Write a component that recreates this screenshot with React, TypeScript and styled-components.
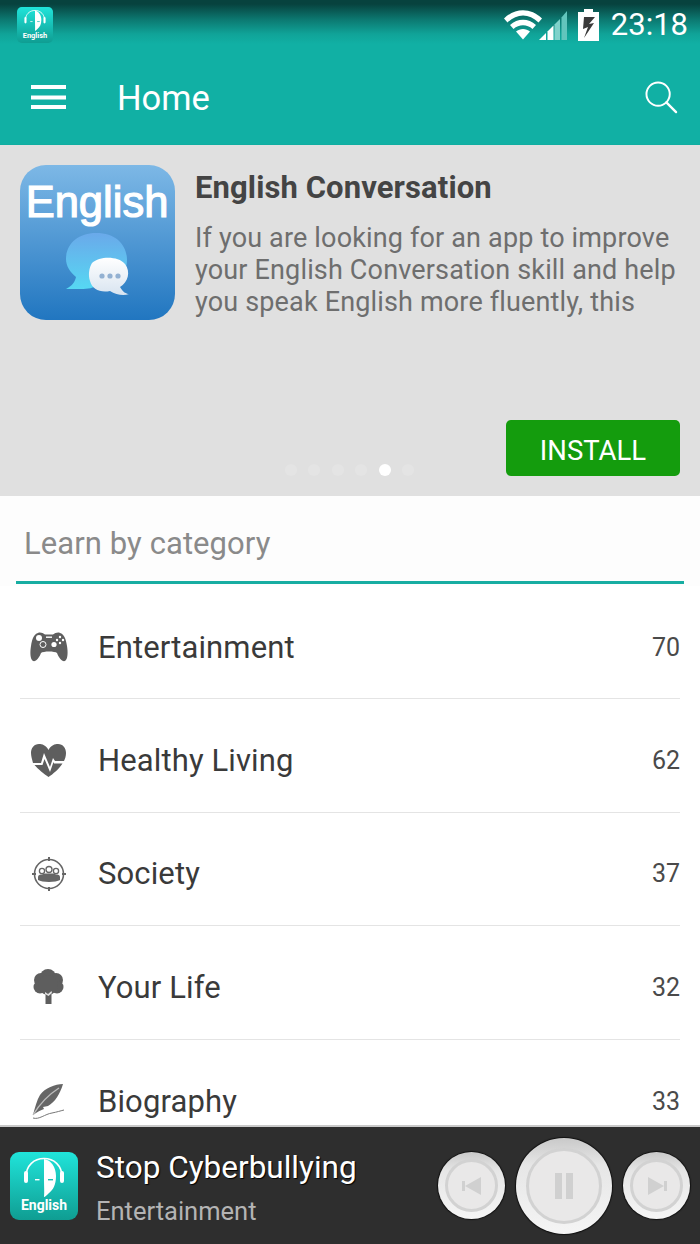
import React from 'react';
import styled, { createGlobalStyle } from 'styled-components';

const GlobalStyle = createGlobalStyle`
  html, body {
    margin: 0;
    padding: 0;
    background: #fff;
    font-family: Roboto, "Liberation Sans", sans-serif;
  }
`;

const Screen = styled.div`
  width: 700px;
  height: 1244px;
  display: flex;
  flex-direction: column;
  overflow: hidden;
`;

const Header = styled.header`
  height: 145px;
  flex: none;
  box-sizing: border-box;
  border-bottom: 1px solid #10ada1;
  background: linear-gradient(180deg, #07423e 0, #07423e 4px, #0c7a72 20px, #10a398 34px, #11b0a4 44px);
`;

const StatusBar = styled.div`
  height: 48px;
  box-sizing: border-box;
  display: flex;
  align-items: flex-start;
  justify-content: space-between;
  padding: 7px 12px 0 17px;
`;

const StatusRight = styled.div`
  display: flex;
  align-items: center;
`;

const StatusSlot = styled.span<{ $gap: number }>`
  display: flex;
  margin-left: ${(p) => p.$gap}px;
`;

const Clock = styled.span`
  color: #fff;
  font-size: 31px;
  line-height: 36px;
  margin-left: 12px;
`;

const Toolbar = styled.div`
  height: 96px;
  box-sizing: border-box;
  display: flex;
  align-items: center;
  padding: 3px 22px 0 31px;
`;

const Title = styled.h1`
  margin: 0 0 0 51px;
  color: #fff;
  font-size: 34.5px;
  font-weight: 400;
  flex: 1;
`;

const Hero = styled.section`
  height: 351px;
  flex: none;
  box-sizing: border-box;
  background: #e0e0e0;
  padding: 20px 20px 0;
  position: relative;
`;

const HeroTop = styled.div`
  display: flex;
  gap: 20px;
`;

const HeroText = styled.div`
  flex: 1;
`;

const HeroTitle = styled.h2`
  margin: 5px 0 16px;
  font-size: 31px;
  line-height: 36px;
  font-weight: 700;
  letter-spacing: 0.1px;
  color: #444;
`;

const HeroBody = styled.p`
  margin: 0;
  font-size: 27px;
  line-height: 32px;
  letter-spacing: 0.16px;
  color: #6e6e6e;
`;

const InstallButton = styled.button`
  position: absolute;
  right: 20px;
  bottom: 20px;
  width: 174px;
  height: 56px;
  padding: 5px 0 0;
  border: none;
  border-radius: 5px;
  background: #149c0d;
  color: #fff;
  font-family: Roboto, sans-serif;
  font-size: 27.5px;
`;

const Dots = styled.div`
  position: absolute;
  left: 285px;
  top: 319px;
  display: flex;
  gap: 11.4px;
`;

const Dot = styled.span<{ $active?: boolean }>`
  width: 12px;
  height: 12px;
  border-radius: 50%;
  background: ${(p) => (p.$active ? '#ffffff' : '#e4e4e4')};
`;

const CategoryHead = styled.div`
  height: 90px;
  flex: none;
  box-sizing: border-box;
  padding: 0 16px;
  background: #fdfdfd;
`;

const CategoryTitle = styled.div`
  height: 88px;
  box-sizing: border-box;
  padding: 28px 0 0 8px;
  border-bottom: 3px solid #17ada2;
  color: #8a8a8a;
  font-size: 31px;
  line-height: 40px;
  letter-spacing: 0.08px;
`;

const List = styled.div`
  flex: 1;
  min-height: 0;
  overflow: hidden;
  padding: 0 20px;
  background: #fff;
`;

const Row = styled.div`
  height: 113.4px;
  flex: none;
  box-sizing: border-box;
  padding-top: 10px;
  display: flex;
  align-items: center;
  border-bottom: 1px solid #e4e4e4;
  &:last-child {
    border-bottom: none;
  }
`;

const RowIcon = styled.div`
  width: 78px;
  flex: none;
  display: flex;
  justify-content: center;
  padding: 0 29px 0 8px;
  box-sizing: border-box;
`;

const RowLabel = styled.span`
  flex: 1;
  color: #3a3a3a;
  font-size: 31px;
  letter-spacing: 0.12px;
`;

const RowCount = styled.span`
  color: #4a4a4a;
  font-size: 25px;
`;

const Player = styled.footer`
  height: 119px;
  flex: none;
  box-sizing: border-box;
  border-top: 2px solid #c9c9c9;
  background: #2e2e2e;
  display: flex;
  align-items: center;
  padding: 0 10px 0 10px;
`;

const TrackInfo = styled.div`
  flex: 1;
  margin-left: 18px;
  padding-top: 9px;
  display: flex;
  flex-direction: column;
`;

const TrackTitle = styled.span`
  color: #fff;
  font-size: 31.5px;
  line-height: 40px;
  margin-top: -4px;
  text-shadow: 1px 1px 1px #000;
`;

const TrackCategory = styled.span`
  color: #b4b4b4;
  font-size: 25.5px;
  line-height: 34px;
  margin-top: 6px;
`;

const Controls = styled.div`
  display: flex;
  align-items: center;
  gap: 11px;
`;

const RoundButton = styled.button<{ $size: number }>`
  width: ${(p) => p.$size}px;
  height: ${(p) => p.$size}px;
  padding: 0;
  border: none;
  border-radius: 50%;
  background: linear-gradient(180deg, #c9c9c9 0, #e6e6e6 28%, #f5f5f5 100%);
  box-shadow: 0 0 1px 1px #111;
  display: flex;
  align-items: center;
  justify-content: center;
`;

const RoundInner = styled.div<{ $size: number }>`
  width: ${(p) => p.$size}px;
  height: ${(p) => p.$size}px;
  box-sizing: border-box;
  border-radius: 50%;
  border: 3px solid #d2d2d2;
  background: #e9e8e8;
  display: flex;
  align-items: center;
  justify-content: center;
`;

const AppLogo = ({ size }: { size: number }) => (
  <svg width={size} height={size} viewBox="0 0 68 68">
    <defs>
      <linearGradient id="logoBg" x1="0" y1="0" x2="0" y2="1">
        <stop offset="0" stopColor="#20e4da" />
        <stop offset="1" stopColor="#0f9d92" />
      </linearGradient>
    </defs>
    <rect width="68" height="68" rx="9" fill="url(#logoBg)" />
    <path d="M16 26 C15 0 53 0 52 26" fill="none" stroke="#fff" strokeWidth="1.6" />
    <rect x="14" y="19" width="4" height="12" rx="2" fill="#fff" />
    <rect x="50" y="19" width="4" height="12" rx="2" fill="#fff" />
    <path d="M34 7 C41 8 46 15 46 24 C46 33 43 38 39 41 C37 43 35 45 34 45 C34.500 40 34 34 34 28Z" fill="#fff" />
    <rect x="25" y="27" width="4.500" height="1.400" fill="#fff" />
    <rect x="38" y="27" width="5" height="1.400" fill="#1bbfb4" />
    <text x="34" y="58" textAnchor="middle" fontFamily="Roboto, sans-serif" fontWeight="700" fontSize="14" fill="#fff">
      English
    </text>
  </svg>
);

const WifiIcon = () => (
  <svg width="38" height="30" viewBox="0 0 38 30">
    <path d="M0 8.500 C11 -2.500 27 -2.500 38 8.500 L34.500 12.500 C25 3 13 3 3.500 12.500Z" fill="#fff" />
    <path d="M6 15 C13.500 8 24.500 8 32 15 L28.500 19 C23 14 15 14 9.500 19Z" fill="#fff" />
    <path d="M12 21.500 C16 18 22 18 26 21.500 L19 29.500Z" fill="#fff" />
  </svg>
);

const SignalIcon = () => (
  <svg width="29" height="32" viewBox="0 0 29 32">
    <path d="M0 31 L7 24 V31Z" fill="#fff" />
    <path d="M8.500 22.500 L14.500 16.500 V31 H8.500Z" fill="#fff" />
    <path d="M15.500 15.500 L21 10 V31 H15.500Z" fill="#7fd2cb" />
    <path d="M22.500 8.500 L28 2 V31 H22.500Z" fill="#62c5bd" />
  </svg>
);

const BatteryIcon = () => (
  <svg width="21" height="32" viewBox="0 0 21 32">
    <path d="M6 0 H15 V3 H21 V32 H0 V3 H6Z" fill="#fff" />
    <path d="M17 8 L6 8 L5 20 L10 18 L6 29 L16 14 L11 15Z" fill="#3a3a3a" />
  </svg>
);

const MenuIcon = () => (
  <svg width="35" height="25" viewBox="0 0 35 25">
    <rect y="0" width="35" height="4" fill="#fff" />
    <rect y="10.500" width="35" height="4" fill="#fff" />
    <rect y="20" width="35" height="4" fill="#fff" />
  </svg>
);

const SearchIcon = () => (
  <svg width="33" height="33" viewBox="0 0 34 34" fill="none" stroke="#fff" strokeWidth="2">
    <circle cx="13.500" cy="13.500" r="12" />
    <path d="M22 22 L32 32" strokeLinecap="round" strokeWidth="2.400" />
  </svg>
);

const HeroIcon = () => (
  <svg width="155" height="155" viewBox="0 0 155 155">
    <defs>
      <linearGradient id="heroBg" x1="0" y1="0" x2="0" y2="1">
        <stop offset="0" stopColor="#7db8e6" />
        <stop offset="1" stopColor="#2176c0" />
      </linearGradient>
      <linearGradient id="bubbleBg" x1="0" y1="0" x2="0" y2="1">
        <stop offset="0" stopColor="#6aa9ea" />
        <stop offset="1" stopColor="#56d8f3" />
      </linearGradient>
      <linearGradient id="smallBubble" x1="0" y1="0" x2="0" y2="1">
        <stop offset="0" stopColor="#ffffff" />
        <stop offset="1" stopColor="#d8e4f0" />
      </linearGradient>
    </defs>
    <rect width="155" height="155" rx="26" fill="url(#heroBg)" />
    <text x="77" y="52" textAnchor="middle" fontFamily="'Liberation Sans', sans-serif" fontSize="43.500" fill="#fff" stroke="#fff" strokeWidth="1.200">
      English
    </text>
    <path d="M76 68 C97 68 107 81 107 95 C107 110 94 120 76 121 C70 125 58 124 46 124 C52 121 55 117 56 112 C50 107 46 101 46 94 C46 79 58 68 76 68Z" fill="url(#bubbleBg)" />
    <path d="M72 98 C80 91 98 91 105 99 C111 107 108 117 100 122 C103 127 106 129 109 129 C104 131 96 130 90 126 C80 128 72 124 70 116 C68 110 69 103 72 98Z" fill="url(#smallBubble)" />
    <circle cx="82" cy="111" r="2.600" fill="#93b1d2" />
    <circle cx="90" cy="111" r="2.600" fill="#93b1d2" />
    <circle cx="98" cy="111" r="2.600" fill="#93b1d2" />
  </svg>
);

const GamepadIcon = () => (
  <svg width="38" height="30" viewBox="0 0 38 30">
    <path d="M8 1 C10 0 13 1 15 2.500 H23 C25 1 28 0 30 1 C34 2 36 7 37 14 C38 20 38 27 35 29 C32 30 29 26 27 21 C25 19 13 19 11 21 C9 26 6 30 3 29 C0 27 0 20 1 14 C2 7 4 2 8 1Z" fill="#5e5e5e" />
    <circle cx="9" cy="6" r="3" fill="#fff" />
    <circle cx="13" cy="12.500" r="3" fill="none" stroke="#fff" strokeWidth="1" />
    <circle cx="24" cy="12.500" r="2.600" fill="#fff" />
    <circle cx="30" cy="5" r="1.200" fill="#fff" />
    <circle cx="33" cy="8" r="1.200" fill="#fff" />
    <circle cx="27" cy="8" r="1.200" fill="#fff" />
    <circle cx="30" cy="11" r="1.200" fill="#fff" />
    <rect x="16" y="4.500" width="6" height="1.400" fill="#fff" />
  </svg>
);

const HeartIcon = () => (
  <svg width="35" height="33" viewBox="0 0 35 33">
    <path d="M17.500 6 C20 1 24 0 27 0 C32 0 35 4 35 9 C35 12 34 15 33 17 H24 L22 14 L19 23 L13 9 L10 19 H2 C1 15 0 12 0 9 C0 4 3 0 8 0 C11 0 15 1 17.500 6Z" fill="#5e5e5e" />
    <path d="M3.500 21 H11.500 L13.500 15 L19 28 L22.500 18 L23 19.500 H31.500 C28 25 22 30 17.500 33 C13 30 7 25 3.500 21Z" fill="#5e5e5e" />
  </svg>
);

const SocietyIcon = () => (
  <svg width="34" height="34" viewBox="0 0 34 34">
    <circle cx="17" cy="17" r="14.500" fill="none" stroke="#666" strokeWidth="1.600" />
    <rect x="16" y="0" width="2" height="4" fill="#666" />
    <rect x="16" y="30" width="2" height="4" fill="#666" />
    <rect x="0" y="16" width="4" height="2" fill="#666" />
    <rect x="30" y="16" width="4" height="2" fill="#666" />
    <circle cx="10" cy="14" r="2.600" fill="none" stroke="#666" strokeWidth="1.300" />
    <circle cx="17" cy="12.500" r="3" fill="none" stroke="#666" strokeWidth="1.300" />
    <circle cx="24" cy="14" r="2.600" fill="none" stroke="#666" strokeWidth="1.300" />
    <path d="M6 23 V20 C6 18 8 17.500 10 17.500 C11 17 12 16.500 13 16.500 H21 C22 16.500 23 17 24 17.500 C26 17.500 28 18 28 20 V23 C24 25.500 10 25.500 6 23Z" fill="#666" />
  </svg>
);

const TreeIcon = () => (
  <svg width="31" height="36" viewBox="0 0 31 36">
    <g fill="#5e5e5e">
      <circle cx="15" cy="8" r="8" />
      <circle cx="8" cy="11" r="7" />
      <circle cx="23" cy="11" r="7" />
      <circle cx="7" cy="18" r="6.500" />
      <circle cx="24" cy="18" r="6.500" />
      <circle cx="15" cy="16" r="10" />
      <path d="M12.500 20 H18.500 V35 H12.500Z" />
    </g>
    <path d="M12 23 L15 25 L18.500 22 L19 24 L15.500 27 L12 25Z" fill="#fff" opacity="0.8" />
  </svg>
);

const FeatherIcon = () => (
  <svg width="36" height="38" viewBox="0 0 36 38">
    <path d="M32 2 C24 2 14 6 9 13 C6 18 4 25 2 33 C6 30 10 28 13 27 L12 25 L17 24 C24 20 29 12 32 2Z" fill="#666" />
    <path d="M2 33 C8 23 17 13 28 6" stroke="#bdbdbd" strokeWidth="1.400" fill="none" />
    <path d="M2 36 C8 38 14 32 21 31 C26 30 29 29 33 28" stroke="#777" strokeWidth="1" fill="none" />
  </svg>
);

const PrevIcon = () => (
  <svg width="20" height="18" viewBox="0 0 20 18">
    <rect x="0" y="4" width="3" height="10" fill="#d0d0d0" />
    <path d="M3 9 L19 0 V18Z" fill="#d0d0d0" />
  </svg>
);

const NextIcon = () => (
  <svg width="20" height="18" viewBox="0 0 20 18">
    <path d="M1 0 L17 9 L1 18Z" fill="#d0d0d0" />
    <rect x="17" y="4" width="3" height="10" fill="#d0d0d0" />
  </svg>
);

const PauseIcon = () => (
  <svg width="18" height="26" viewBox="0 0 18 26">
    <rect x="0" y="0" width="7" height="26" fill="#d0d0d0" />
    <rect x="11" y="0" width="7" height="26" fill="#d0d0d0" />
  </svg>
);

const categories = [
  { label: 'Entertainment', count: 70, icon: <GamepadIcon /> },
  { label: 'Healthy Living', count: 62, icon: <HeartIcon /> },
  { label: 'Society', count: 37, icon: <SocietyIcon /> },
  { label: 'Your Life', count: 32, icon: <TreeIcon /> },
  { label: 'Biography', count: 33, icon: <FeatherIcon /> },
];

const App = () => (
  <Screen>
    <GlobalStyle />
    <Header>
      <StatusBar>
        <AppLogo size={36} />
        <StatusRight>
          <WifiIcon />
          <StatusSlot $gap={-3}>
            <SignalIcon />
          </StatusSlot>
          <StatusSlot $gap={10}>
            <BatteryIcon />
          </StatusSlot>
          <Clock>23:18</Clock>
        </StatusRight>
      </StatusBar>
      <Toolbar>
        <MenuIcon />
        <Title>Home</Title>
        <SearchIcon />
      </Toolbar>
    </Header>
    <Hero>
      <HeroTop>
        <HeroIcon />
        <HeroText>
          <HeroTitle>English Conversation</HeroTitle>
          <HeroBody>
            If you are looking for an app to improve your English Conversation skill and help you speak English more fluently, this
          </HeroBody>
        </HeroText>
      </HeroTop>
      <Dots>
        {[0, 1, 2, 3, 4, 5].map((i) => (
          <Dot key={i} $active={i === 4} />
        ))}
      </Dots>
      <InstallButton>INSTALL</InstallButton>
    </Hero>
    <CategoryHead>
      <CategoryTitle>Learn by category</CategoryTitle>
    </CategoryHead>
    <List>
      {categories.map((c) => (
        <Row key={c.label}>
          <RowIcon>{c.icon}</RowIcon>
          <RowLabel>{c.label}</RowLabel>
          <RowCount>{c.count}</RowCount>
        </Row>
      ))}
    </List>
    <Player>
      <AppLogo size={68} />
      <TrackInfo>
        <TrackTitle>Stop Cyberbullying</TrackTitle>
        <TrackCategory>Entertainment</TrackCategory>
      </TrackInfo>
      <Controls>
        <RoundButton $size={67}>
          <RoundInner $size={53}>
            <PrevIcon />
          </RoundInner>
        </RoundButton>
        <RoundButton $size={96}>
          <RoundInner $size={76}>
            <PauseIcon />
          </RoundInner>
        </RoundButton>
        <RoundButton $size={67}>
          <RoundInner $size={53}>
            <NextIcon />
          </RoundInner>
        </RoundButton>
      </Controls>
    </Player>
  </Screen>
);

export default App;
